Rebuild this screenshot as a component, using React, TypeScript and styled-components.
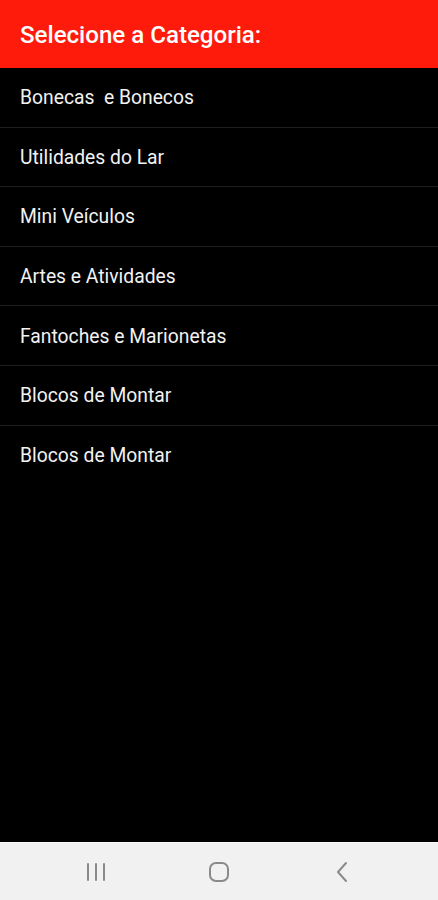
import React from 'react';
import styled, { createGlobalStyle } from 'styled-components';

const categorias = [
    'Bonecas  e Bonecos',
    'Utilidades do Lar',
    'Mini Veículos',
    'Artes e Atividades',
    'Fantoches e Marionetas',
    'Blocos de Montar',
    'Blocos de Montar',
];

const App = () => {
    return (
        <>
            <GlobalStyle />
            <Screen>
                <Header>
                    <Title>Selecione a Categoria:</Title>
                </Header>
                <List>
                    {categorias.map((nome, i) => (
                        <Row key={i} last={i === categorias.length - 1}>
                            {nome}
                        </Row>
                    ))}
                </List>
                <NavBar>
                    <NavButton>
                        <svg width="22" height="20" viewBox="0 0 22 20">
                            <rect x="2" y="1" width="2" height="18" rx="1" fill="#8a8a8a" />
                            <rect x="10" y="1" width="2" height="18" rx="1" fill="#8a8a8a" />
                            <rect x="18" y="1" width="2" height="18" rx="1" fill="#8a8a8a" />
                        </svg>
                    </NavButton>
                    <NavButton>
                        <svg width="22" height="22" viewBox="0 0 22 22">
                            <rect x="2" y="2" width="18" height="18" rx="6" fill="none" stroke="#8a8a8a" strokeWidth="2" />
                        </svg>
                    </NavButton>
                    <NavButton>
                        <svg width="14" height="22" viewBox="0 0 14 22">
                            <path d="M11 2 L3 11 L11 20" fill="none" stroke="#8a8a8a" strokeWidth="2" strokeLinecap="round" strokeLinejoin="round" />
                        </svg>
                    </NavButton>
                </NavBar>
            </Screen>
        </>
    );
};

const GlobalStyle = createGlobalStyle`
    html, body {
        margin: 0;
        padding: 0;
        background: #000;
    }
    * {
        box-sizing: border-box;
    }
`;

const Screen = styled.div`
    width: 438px;
    height: 900px;
    display: flex;
    flex-direction: column;
    background: #000;
    font-family: Roboto, "Liberation Sans", sans-serif;
`;

const Header = styled.div`
    height: 68px;
    background: #ff1b0c;
    display: flex;
    align-items: center;
    padding: 2px 20px 0;
`;

const Title = styled.h1`
    margin: 0;
    color: #fff;
    font-size: 24.1px;
    font-weight: 500;
`;

const List = styled.div`
    flex: 1;
    display: flex;
    flex-direction: column;
`;

const Row = styled.div<{ last?: boolean }>`
    height: 59.6px;
    display: flex;
    align-items: center;
    padding: 1px 20px 0;
    color: #f2f2f2;
    font-size: 19.3px;
    white-space: pre;
    border-bottom: 1.5px solid ${p => (p.last ? 'transparent' : '#1f1f1f')};
`;

const NavBar = styled.div`
    height: 58px;
    background: #f1f1f1;
    border-top: 1px solid #fafafa;
    display: flex;
    align-items: center;
    justify-content: space-around;
    padding: 0 34px;
`;

const NavButton = styled.div`
    width: 60px;
    display: flex;
    justify-content: center;
    align-items: center;
`;

export default App;
